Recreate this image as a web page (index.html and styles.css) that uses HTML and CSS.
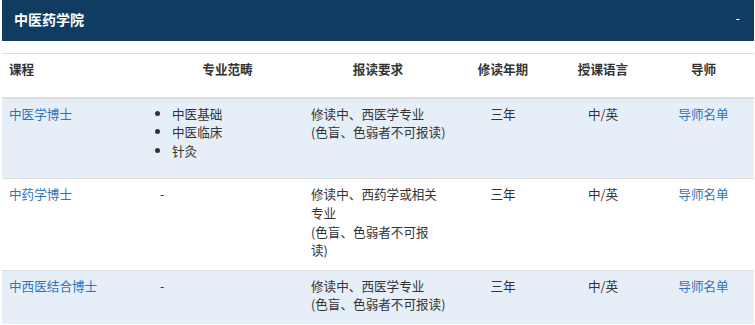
FILE: index.html
```html
<!DOCTYPE html>
<html lang="zh">
<head>
<meta charset="utf-8">
<link rel="stylesheet" href="styles.css">
</head>
<body>
<div class="panel">
  <div class="panel-head">
    <span class="panel-title">中医药学院</span>
    <span class="panel-toggle">-</span>
  </div>
  <table class="prog">
    <colgroup>
      <col class="c1"><col class="c2"><col class="c3"><col class="c4"><col class="c5"><col class="c6">
    </colgroup>
    <thead>
      <tr>
        <th class="left">课程</th>
        <th>专业范畴</th>
        <th>报读要求</th>
        <th>修读年期</th>
        <th>授课语言</th>
        <th>导师</th>
      </tr>
    </thead>
    <tbody>
      <tr class="alt">
        <td><a href="#">中医学博士</a></td>
        <td><ul><li>中医基础</li><li>中医临床</li><li>针灸</li></ul></td>
        <td>修读中、西医学专业<br><span class="nw">(色盲、色弱者不可报读)</span></td>
        <td class="center">三年</td>
        <td class="center">中/英</td>
        <td class="center"><a href="#">导师名单</a></td>
      </tr>
      <tr>
        <td><a href="#">中药学博士</a></td>
        <td>-</td>
        <td>修读中、西药学或相关<br>专业<br>(色盲、色弱者不可报<br>读)</td>
        <td class="center">三年</td>
        <td class="center">中/英</td>
        <td class="center"><a href="#">导师名单</a></td>
      </tr>
      <tr class="alt">
        <td><a href="#">中西医结合博士</a></td>
        <td>-</td>
        <td>修读中、西医学专业<br><span class="nw">(色盲、色弱者不可报读)</span></td>
        <td class="center">三年</td>
        <td class="center">中/英</td>
        <td class="center"><a href="#">导师名单</a></td>
      </tr>
    </tbody>
  </table>
</div>
</body>
</html>
```

FILE: styles.css
```css
html, body {
  margin: 0;
  padding: 0;
  background: #ffffff;
}
body {
  font-family: "Noto Sans CJK SC", "Microsoft YaHei", sans-serif;
  font-size: 12.6px;
  line-height: 18.6px;
  color: #333333;
}
.panel {
  margin: 0 1px 0 2px;
}
.panel-head {
  background: #103c61;
  color: #ffffff;
  height: 41px;
  display: flex;
  align-items: center;
  justify-content: space-between;
  padding: 0 14px 0 12px;
  box-sizing: border-box;
}
.panel-title {
  font-size: 14px;
  font-weight: bold;
  margin-top: -2px;
}
.panel-toggle {
  font-size: 13px;
  margin-top: -4px;
}
.prog {
  width: 100%;
  border-collapse: collapse;
  table-layout: fixed;
  margin-top: 12px;
}
.c1 { width: 150px; }
.c2 { width: 151px; }
.c3 { width: 150px; }
.c4 { width: 100px; }
.c5 { width: 100px; }
.c6 { width: 101px; }
.prog th {
  font-weight: bold;
  text-align: center;
  vertical-align: top;
  padding: 6px 8px 18px;
  border-top: 1px solid #dddddd;
  border-bottom: 2px solid #dddddd;
  color: #333333;
}
.prog th.left {
  text-align: left;
  padding-left: 7px;
}
.prog td {
  vertical-align: top;
  padding: 6px 8px 10px;
  border-top: 1px solid #dddddd;
  text-align: left;
}
.prog td:first-child {
  padding-left: 7px;
}
.prog td.center {
  text-align: center;
}
.prog tr.alt td {
  background: #e6eef8;
}
.prog a {
  color: #2f74b8;
  text-decoration: none;
}
.prog ul {
  margin: 0 0 8px;
  padding-left: 12px;
}
.nw {
  white-space: nowrap;
}
```
